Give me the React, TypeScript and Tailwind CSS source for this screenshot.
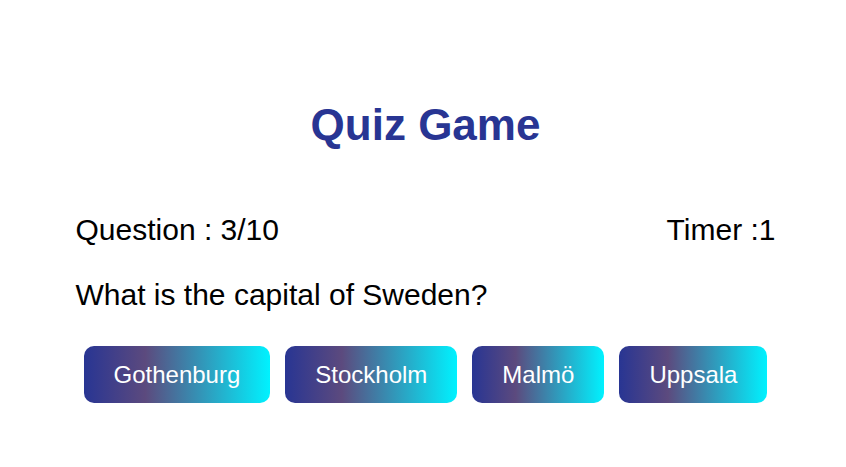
const options = ['Gothenburg', 'Stockholm', 'Malmö', 'Uppsala'];

export default function App() {
  return (
    <div className="min-h-screen bg-white pl-[5px] font-['Liberation_Sans',Arial,sans-serif] text-black">
      <h1 className="pt-[100px] text-center text-[44px] leading-[50px] font-bold text-[#283593]">
        Quiz Game
      </h1>

      <div className="mx-auto w-[700px]">
        <div className="mt-[62px] flex justify-between text-[30px] leading-[36px]">
          <span>Question : 3/10</span>
          <span>Timer :1</span>
        </div>

        <p className="mt-[29px] text-[30px] leading-[36px]">What is the capital of Sweden?</p>

        <div className="mt-[33px] flex justify-center gap-[15px]">
          {options.map((opt) => (
            <button
              key={opt}
              className="rounded-[10px] bg-[linear-gradient(90deg,#283593_0%,#5c4a7e_33%,#00f2ff_100%)] px-[30px] py-[15px] text-[24px] leading-[27px] text-white"
            >
              {opt}
            </button>
          ))}
        </div>
      </div>
    </div>
  );
}
